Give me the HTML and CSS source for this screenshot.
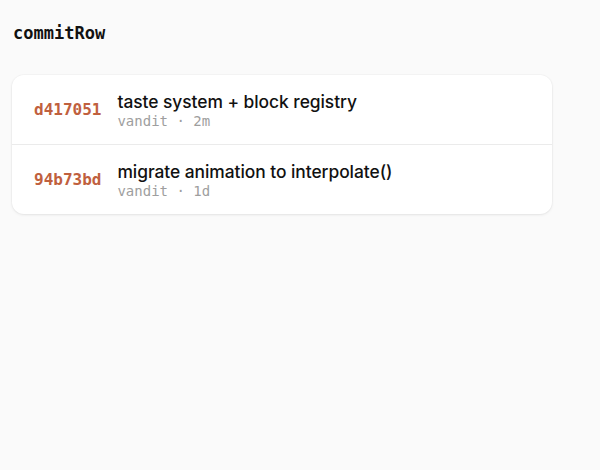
FILE: index.html
```html
<!DOCTYPE html>
<html lang="en">
<head>
    <meta charset="UTF-8">
    <meta name="viewport" content="width=device-width, initial-scale=1.0">
    <title>commitRow</title>
    <link rel="stylesheet" href="styles.css">
</head>
<body>
    <h1 class="block-name">commitRow</h1>

    <div class="commit-list">
        <div class="commit-row">
            <span class="commit-hash">d417051</span>
            <div class="commit-info">
                <div class="commit-msg">taste system + block registry</div>
                <div class="commit-meta">vandit · 2m</div>
            </div>
        </div>
        <div class="commit-row">
            <span class="commit-hash">94b73bd</span>
            <div class="commit-info">
                <div class="commit-msg">migrate animation to interpolate()</div>
                <div class="commit-meta">vandit · 1d</div>
            </div>
        </div>
    </div>
</body>
</html>
```

FILE: styles.css
```css
* {
    margin: 0;
    padding: 0;
    box-sizing: border-box;
}
body {
    background-color: #fafafa;
    font-family: Inter, "Noto Sans", sans-serif;
    color: #111;
    padding: 22px 12px;
}
.block-name {
    font-family: "DejaVu Sans Mono", monospace;
    font-size: 17px;
    font-weight: 700;
    line-height: 22px;
    padding-left: 1px;
    margin-bottom: 31px;
}
.commit-list {
    width: 540px;
    background: #fff;
    border-radius: 12px;
    box-shadow: 0 1px 3px rgba(0,0,0,0.08), 0 0 0 1px rgba(0,0,0,0.02);
}
.commit-row {
    display: flex;
    align-items: center;
    gap: 16px;
    height: 69px;
    padding: 0 22px;
}
.commit-row + .commit-row {
    height: 70px;
    border-top: 1px solid #ebebeb;
}
.commit-hash {
    font-family: "DejaVu Sans Mono", monospace;
    font-size: 16px;
    font-weight: 700;
    color: #c0603e;
}
.commit-msg {
    font-size: 17.4px;
    line-height: 22px;
    letter-spacing: -0.05px;
    font-weight: 500;
}
.commit-meta {
    font-family: "DejaVu Sans Mono", monospace;
    font-size: 14px;
    line-height: 16px;
    color: #9e9e9e;
}
```
